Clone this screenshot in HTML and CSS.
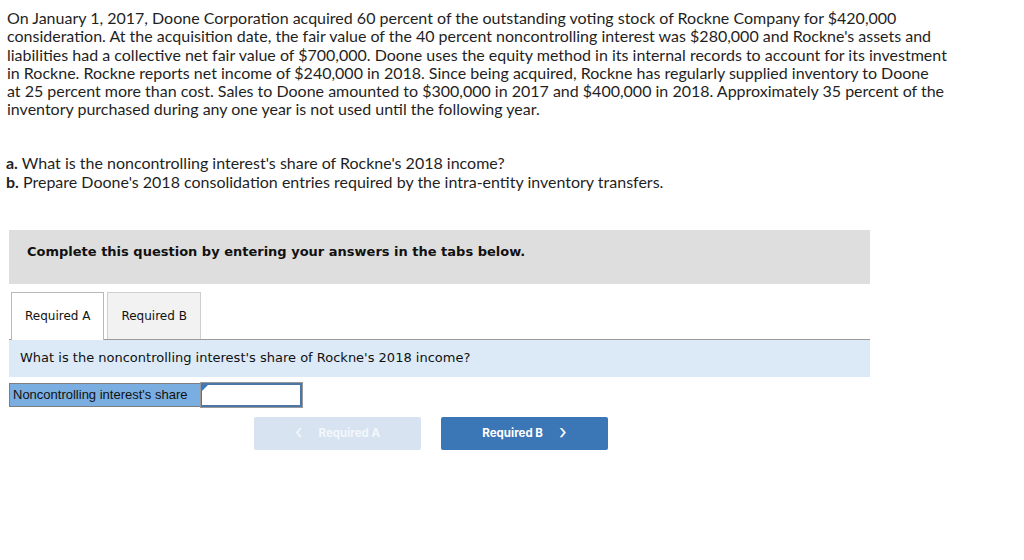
FILE: index.html
```html
<!DOCTYPE html>
<html>
<head>
<meta charset="utf-8">
<link rel="stylesheet" href="styles.css">
</head>
<body>
<div class="page">
  <p class="intro">On January 1, 2017, Doone Corporation acquired 60 percent of the outstanding voting stock of Rockne Company for $420,000<br>consideration. At the acquisition date, the fair value of the 40 percent noncontrolling interest was $280,000 and Rockne's assets and<br>liabilities had a collective net fair value of $700,000. Doone uses the equity method in its internal records to account for its investment<br>in Rockne. Rockne reports net income of $240,000 in 2018. Since being acquired, Rockne has regularly supplied inventory to Doone<br>at 25 percent more than cost. Sales to Doone amounted to $300,000 in 2017 and $400,000 in 2018. Approximately 35 percent of the<br>inventory purchased during any one year is not used until the following year.</p>
  <ol class="parts">
    <li><b>a.</b> What is the noncontrolling interest's share of Rockne's 2018 income?</li>
    <li><b>b.</b> Prepare Doone's 2018 consolidation entries required by the intra-entity inventory transfers.</li>
  </ol>
  <div class="panel">
    <div class="banner">Complete this question by entering your answers in the tabs below.</div>
    <div class="tabs">
      <div class="tab active">Required A</div>
      <div class="tab">Required B</div>
    </div>
    <div class="prompt">What is the noncontrolling interest's share of Rockne's 2018 income?</div>
    <div class="answer">
      <div class="label">Noncontrolling interest's share</div>
      <div class="input"><span class="flag"></span></div>
    </div>
    <div class="nav">
      <div class="btn disabled"><span class="chev">&lsaquo;</span><span>Required A</span></div>
      <div class="btn primary"><span>Required B</span><span class="chev">&rsaquo;</span></div>
    </div>
  </div>
</div>
</body>
</html>
```
FILE: styles.css
```css
html, body {
  margin: 0;
  padding: 0;
  background: #fff;
}
.page {
  padding: 9px 0 0 0;
  width: 1024px;
}
.intro {
  margin: 0;
  padding: 0 0 0 7px;
  white-space: nowrap;
  font-family: Lato, "Open Sans", sans-serif;
  font-size: 16px;
  line-height: 18.3px;
  color: #1f1f1f;
}
.parts {
  list-style: none;
  margin: 34px 0 0 0;
  padding: 0 0 0 6px;
  font-family: Lato, "Open Sans", sans-serif;
  font-size: 16px;
  line-height: 19px;
  color: #1f1f1f;
}
.parts li { height: 19px; }
.parts b { font-weight: 700; }
.panel {
  margin: 39px 0 0 9px;
  width: 861px;
}
.banner {
  background: #dedede;
  height: 54px;
  box-sizing: border-box;
  padding: 14px 0 0 18px;
  font-family: "DejaVu Sans", Verdana, sans-serif;
  font-weight: bold;
  font-size: 13px;
  color: #111;
}
.tabs {
  display: flex;
  margin-top: 8px;
  padding-left: 2px;
  gap: 3px;
  border-bottom: 1px solid #9a9a9a;
}
.tab {
  height: 47px;
  box-sizing: border-box;
  padding: 0 13px;
  display: flex;
  align-items: center;
  border: 1px solid #cfcfcf;
  border-bottom: none;
  font-family: "DejaVu Sans", Verdana, sans-serif;
  font-size: 12px;
  color: #111;
  background: #f2f2f2;
}
.tab.active {
  background: #fff;
  border-color: #b8b8b8;
  margin-bottom: -1px;
  height: 48px;
}
.prompt {
  background: #dbeaf6;
  height: 37px;
  box-sizing: border-box;
  padding: 10px 0 0 11px;
  font-family: "DejaVu Sans", Verdana, sans-serif;
  font-size: 13px;
  color: #111;
}
.answer {
  display: flex;
  margin-top: 6px;
  height: 24px;
}
.label {
  width: 192px;
  box-sizing: border-box;
  background: #7aaee0;
  border: 1px solid #7d7d7d;
  padding: 3px 0 0 3px;
  font-family: "Liberation Sans", Arial, sans-serif;
  font-size: 13px;
  color: #111;
}
.input {
  position: relative;
  width: 101px;
  box-sizing: border-box;
  border: 2px solid #4a76a8;
  border-left-width: 1px;
  outline: 1px solid #999;
  background: #fff;
}
.flag {
  position: absolute;
  left: 0;
  top: 0;
  width: 0;
  height: 0;
  border-top: 6px solid #3a78c0;
  border-right: 6px solid transparent;
}
.nav {
  display: flex;
  gap: 20px;
  margin: 10px 0 0 245px;
}
.btn {
  width: 167px;
  height: 33px;
  border-radius: 2px;
  display: flex;
  align-items: center;
  justify-content: center;
  gap: 16px;
  font-family: Inter, "Liberation Sans", sans-serif;
  font-weight: 700;
  font-size: 11.5px;
  color: #fff;
}
.btn .chev {
  font-size: 20px;
  font-weight: 400;
  line-height: 1;
  margin-top: -3px;
}
.btn.disabled {
  background: #d7e3f1;
  color: #f3f7fb;
}
.btn.primary {
  background: #3b76b6;
}
```
